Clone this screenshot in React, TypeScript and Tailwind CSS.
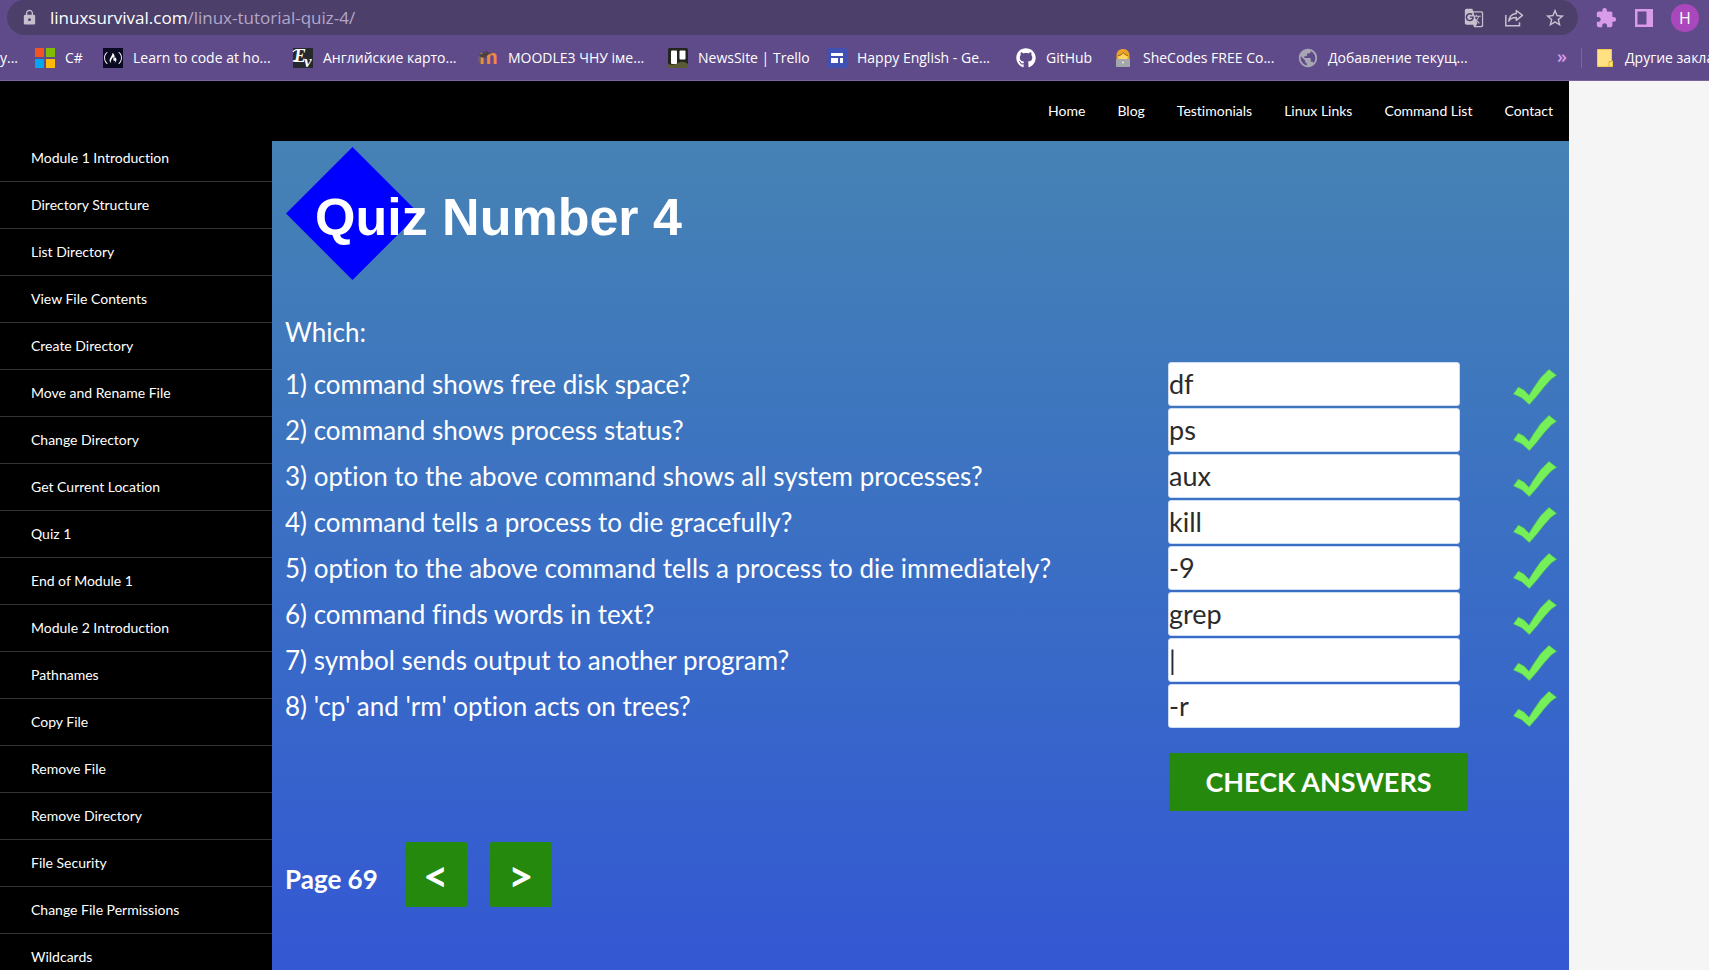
import type { ReactNode } from "react";
import { MdExtension, MdGTranslate, MdLock, MdPublic, MdStarOutline } from "react-icons/md";
import { FaFreeCodeCamp, FaGithub } from "react-icons/fa";

const chromeFont = "font-['Open_Sans','Noto_Sans',sans-serif]";
const pageFont = "font-['Lato',sans-serif] [font-variant-ligatures:none]";

function WindowsIcon() {
  return (
    <svg viewBox="0 0 20 20" className="size-5">
      <rect width="9" height="9" fill="#f35325" />
      <rect x="11" width="9" height="9" fill="#81bc06" />
      <rect y="11" width="9" height="9" fill="#05a6f0" />
      <rect x="11" y="11" width="9" height="9" fill="#ffba08" />
    </svg>
  );
}

function CampIcon() {
  return (
    <span className="flex size-5 items-center justify-center bg-[#0a0a23] text-white">
      <FaFreeCodeCamp className="size-[18px]" />
    </span>
  );
}

function CardsIcon() {
  return (
    <svg viewBox="0 0 20 20" className="size-5 overflow-visible">
      <rect width="20" height="20" fill="#25282c" />
      <text x="1" y="14" fontSize="18" fontWeight="bold" fontStyle="italic" fontFamily="Liberation Serif, serif" fill="#fff">E</text>
      <path d="M0 4c1-2 4-3 6-1.500M0 13.500c2-2.500 4-1 6 .3" stroke="#fff" strokeWidth="1.200" fill="none" />
      <text x="11" y="19" fontSize="17" fontWeight="bold" fontStyle="italic" fontFamily="Liberation Serif, serif" fill="#fff">v</text>
    </svg>
  );
}

function MoodleIcon() {
  return (
    <svg viewBox="0 0 20 20" className="size-5 overflow-visible">
      <text x="1" y="16" fontSize="21" fontWeight="bold" fontFamily="Liberation Sans, sans-serif" fill="#ef8a3c">m</text>
      <path d="M0 7.500 9 3l3 2-5 5-4-.8z" fill="#4a4248" />
      <path d="M1 7.500v7" stroke="#8a6a80" strokeWidth="0.800" />
    </svg>
  );
}

function TrelloIcon() {
  return (
    <svg viewBox="0 0 20 20" className="size-5">
      <rect width="20" height="20" rx="1.500" fill="#23251f" />
      <path d="M0 16q5 2 10-1t10 1v4H0z" fill="#5c5a35" />
      <rect x="3" y="2.500" width="6" height="13.500" rx="1" fill="#fff" />
      <rect x="11.500" y="2.500" width="6" height="9" rx="1" fill="#fff" />
    </svg>
  );
}

function SitesIcon() {
  return (
    <svg viewBox="0 0 20 20" className="size-5">
      <rect width="20" height="20" rx="2" fill="#3f51b5" />
      <path d="M4 5h12v3H4zM4 10h7v5H4zM13 10h3v5h-3z" fill="#fff" />
    </svg>
  );
}

function CoderIcon() {
  return (
    <svg viewBox="0 0 20 20" className="size-5">
      <path d="M2.500 19c0-5 2-6 3-6h9c1 0 3 1 3 6z" fill="#46589c" />
      <path d="M3.500 13V7.500C3.500 3.500 6 1 10 1s6.500 2.500 6.500 6.500V13z" fill="#e9a32b" />
      <path d="M5.500 8c2.500-.3 4-1.500 4.800-3 1 1.800 2.400 2.700 4.200 3v4h-9z" fill="#ffd75e" />
      <path d="M5 7.500c3 0 4.500-1.500 5.300-3 1 1.800 2.500 2.700 4.700 3" fill="none" stroke="#8a5714" strokeWidth="0.800" />
      <rect x="3" y="11" width="14" height="8" rx="0.800" fill="#a3a6ab" />
      <circle cx="10" cy="14.500" r="0.900" fill="#f5f5f5" />
    </svg>
  );
}

function GlobeIcon() {
  return <MdPublic className="-mx-px size-[22px] text-[#a9a6b3]" />;
}

function NoteIcon() {
  return (
    <svg viewBox="0 0 16 20" className="h-5 w-4">
      <path d="M.5 1.500h14v11.500h1v5.500H.5z" fill="#ffe082" stroke="#f2c94c" />
      <path d="M12 18.500v-5h3" fill="none" stroke="#e0b036" />
    </svg>
  );
}

function ShareIcon() {
  return (
    <svg viewBox="0 0 20 20" className="size-5" fill="none" stroke="#c5bfce" strokeWidth="1.500">
      <path d="M1.800 7v10.800h13.700v-3.600" />
      <path d="M12.300 2.500 18.500 7.400l-6.200 4.900V9.500c-3.600-.1-6 1-7.500 3.600.4-4.200 3-7.200 7.500-7.700z" strokeLinejoin="round" />
    </svg>
  );
}

function SidePanelIcon() {
  return (
    <svg viewBox="0 0 18 18" className="size-[18px]">
      <path fillRule="evenodd" d="M0 0h18v18H0zM2.500 2.500v13h9v-13z" fill="#d79bea" />
    </svg>
  );
}

function CheckMark() {
  return (
    <svg viewBox="0 0 132 108" className="h-9 w-11" role="img" aria-label="Correct">
      <path
        d="M1 75 16 54l17 9 15 16 12-20 22-32L108 1l9 7 14 11-17 12-20 22-22 28-23 26-22-20z"
        fill="#75f058"
        stroke="#4fae6a"
        strokeWidth="2"
      />
    </svg>
  );
}

const bookmarks: { label: string; icon: ReactNode; width: string }[] = [
  { label: "C#", icon: <WindowsIcon />, width: "w-[48px]" },
  { label: "Learn to code at ho...", icon: <CampIcon />, width: "w-[170px]" },
  { label: "Английские карто...", icon: <CardsIcon />, width: "w-[165px]" },
  { label: "MOODLE3 ЧНУ іме...", icon: <MoodleIcon />, width: "w-[170px]" },
  { label: "NewsSite | Trello", icon: <TrelloIcon />, width: "w-[139px]" },
  { label: "Happy English - Ge...", icon: <SitesIcon />, width: "w-[169px]" },
  { label: "GitHub", icon: <FaGithub className="size-5" />, width: "w-[77px]" },
  { label: "SheCodes FREE Co...", icon: <CoderIcon />, width: "w-[165px]" },
  { label: "Добавление текущ...", icon: <GlobeIcon />, width: "w-[170px]" },
];

const topLinks = ["Home", "Blog", "Testimonials", "Linux Links", "Command List", "Contact"];

const modules = [
  "Module 1 Introduction",
  "Directory Structure",
  "List Directory",
  "View File Contents",
  "Create Directory",
  "Move and Rename File",
  "Change Directory",
  "Get Current Location",
  "Quiz 1",
  "End of Module 1",
  "Module 2 Introduction",
  "Pathnames",
  "Copy File",
  "Remove File",
  "Remove Directory",
  "File Security",
  "Change File Permissions",
  "Wildcards",
];

const questions = [
  { text: "1) command shows free disk space?", answer: "df" },
  { text: "2) command shows process status?", answer: "ps" },
  { text: "3) option to the above command shows all system processes?", answer: "aux" },
  { text: "4) command tells a process to die gracefully?", answer: "kill" },
  { text: "5) option to the above command tells a process to die immediately?", answer: "-9" },
  { text: "6) command finds words in text?", answer: "grep" },
  { text: "7) symbol sends output to another program?", answer: "|" },
  { text: "8) 'cp' and 'rm' option acts on trees?", answer: "-r" },
];

function BrowserBar() {
  return (
    <div className={`shrink-0 overflow-hidden border-b border-[#77659c] bg-[#604b8a] text-white ${chromeFont}`}>
      <div className="flex h-[35px] items-center">
        <div className="ml-[7px] flex h-[35px] flex-1 items-center gap-3 rounded-[18px] bg-[#4c3f69] pr-3 pl-3.5">
          <MdLock className="size-[17px] text-[#c5bfce]" />
          <p className="flex-1 text-[17px] leading-5">
            linuxsurvival.com<span className="text-[#b3a8cb]">/linux-tutorial-quiz-4/</span>
          </p>
          <div className="flex items-center gap-5 text-[#c5bfce]">
            <button aria-label="Translate"><MdGTranslate className="size-5" /></button>
            <button aria-label="Share"><ShareIcon /></button>
            <button aria-label="Bookmark"><MdStarOutline className="size-[22px]" /></button>
          </div>
        </div>
        <div className="flex items-center gap-[18px] pr-2.5 pl-[17px]">
          <button aria-label="Extensions"><MdExtension className="size-[22px] text-[#d79bea]" /></button>
          <button aria-label="Side panel"><SidePanelIcon /></button>
          <button className="size-7 rounded-full bg-[#ab47bc] text-base">H</button>
        </div>
      </div>
      <nav className="flex h-[45px] items-center text-sm leading-5 whitespace-nowrap">
        <a href="#" className="w-[35px] shrink-0">y...</a>
        <div className="flex flex-1 gap-5">
          {bookmarks.map((b) => (
            <a key={b.label} href="#" className={`flex shrink-0 items-center gap-2.5 ${b.width}`}>
              <span className="shrink-0">{b.icon}</span>
              {b.label}
            </a>
          ))}
        </div>
        <button className="mr-3.5 pb-1 text-lg leading-5 font-semibold text-[#d79bea]" aria-label="More bookmarks">»</button>
        <span className="h-5 w-px bg-[#7f62a8]" />
        <a href="#" className="ml-[15px] flex w-28 shrink-0 items-center gap-3">
          <span className="shrink-0"><NoteIcon /></span>
          Другие закладки
        </a>
      </nav>
    </div>
  );
}

function Quiz() {
  return (
    <main className="flex-1 bg-linear-to-b from-[#4682b4] to-[#3457d3] pr-3 pl-[13px] text-[26px] leading-[46px] text-white">
      <div className="relative pt-[6px]">
        <svg viewBox="0 0 134 134" className="ml-px size-[133px]">
          <path d="M67 0l67 67-67 67L0 67z" fill="#0000ff" />
        </svg>
        <h1 className="absolute top-[46px] left-[30px] font-['Liberation_Sans',sans-serif] text-[52px] leading-[60px] font-bold">
          Quiz Number 4
        </h1>
      </div>
      <p className="mt-[29px] mb-[6px]">Which:</p>
      <form onSubmit={(e) => e.preventDefault()}>
        {questions.map((q, i) => (
          <div key={q.text} className="flex h-[46px] items-center">
            <label htmlFor={`answer-${i}`} className="flex-1">{q.text}</label>
            <input
              id={`answer-${i}`}
              defaultValue={q.answer}
              className="h-11 w-[292px] rounded-[3px] border border-[#cddcf5] bg-white text-[27px] text-[#2b2b2b]"
            />
            <span className="mt-1.5 ml-[53px]"><CheckMark /></span>
          </div>
        ))}
        <div className="mt-6 flex justify-end pr-[89px]">
          <button className="h-[58px] w-[299px] rounded-xs bg-[#24890d] text-[27px] font-bold">CHECK ANSWERS</button>
        </div>
      </form>
      <div className="mt-[31px] flex items-center font-bold">
        <span className="mt-2 mr-[27px]">Page 69</span>
        <button className="mr-[23px] h-[65px] w-[62px] rounded-xs bg-[#24890d] text-[44px]">&lt;</button>
        <button className="h-[65px] w-[62px] rounded-xs bg-[#24890d] text-[44px]">&gt;</button>
      </div>
    </main>
  );
}

export default function App() {
  return (
    <div className="flex h-screen flex-col overflow-hidden bg-[#f5f5f5]">
      <BrowserBar />
      <div className={`flex min-h-0 w-full max-w-[1569px] flex-1 flex-col bg-black text-white ${pageFont}`}>
        <header className="flex h-[60px] shrink-0 items-center justify-end gap-8 pr-4 text-sm">
          {topLinks.map((l) => (
            <a key={l} href="#">{l}</a>
          ))}
        </header>
        <div className="flex min-h-0 flex-1">
          <nav className="w-[272px] shrink-0 overflow-hidden text-sm">
            <ul className="-mt-[6px]">
              {modules.map((m) => (
                <li key={m} className="flex h-[47px] items-center border-b border-[#333] pl-[31px]">
                  <a href="#">{m}</a>
                </li>
              ))}
            </ul>
          </nav>
          <Quiz />
        </div>
      </div>
    </div>
  );
}
